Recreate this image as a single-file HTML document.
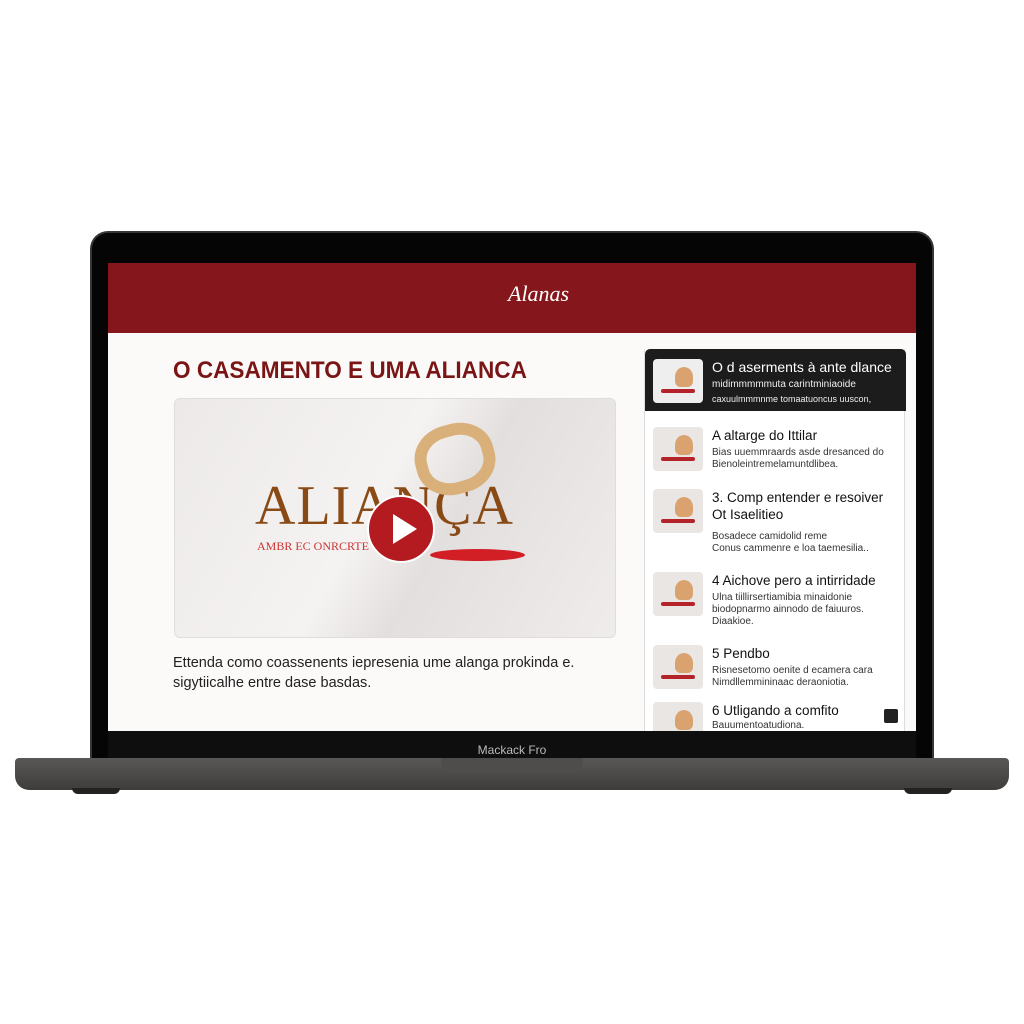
<!DOCTYPE html>
<html><head><meta charset="utf-8"><style>
*{margin:0;padding:0;box-sizing:border-box}
body{width:1024px;height:1024px;background:#fff;position:relative;overflow:hidden;font-family:"Liberation Sans",sans-serif}
.abs{position:absolute}
.bezel{left:90px;top:231px;width:844px;height:532px;background:#050505;border-radius:18px 18px 0 0;border:2px solid #3a3535;border-bottom:none}
.screen{left:108px;top:263px;width:808px;height:468px;background:#fbfaf9;overflow:hidden}
.hdr{left:0;top:0;width:808px;height:70px;background:#85161b}
.base{left:15px;top:758px;width:994px;height:32px;background:linear-gradient(#5a5856,#3e3d3b);border-radius:4px 4px 14px 14px}
.notch{left:441px;top:758px;width:142px;height:14px;background:#4e4d4b;border-radius:0 0 10px 10px}
.foot{top:788px;width:48px;height:6px;background:#222;border-radius:0 0 6px 6px}
.title{left:65px;top:94px;font-size:24px;font-weight:bold;color:#7a1515;transform:scaleX(0.94);transform-origin:left}
.video{left:66px;top:135px;width:442px;height:240px;border-radius:6px;background:linear-gradient(120deg,#ece9e8,#f5f3f2 45%,#e3dfde 60%,#efeceb);border:1px solid #ddd;overflow:hidden}
.para{left:65px;top:390px;font-size:14.5px;line-height:20px;color:#222}
.side{left:536px;top:86px;width:261px;height:400px;border-left:1px solid #ddd;border-right:1px solid #ddd;background:#fff}
.item{position:absolute;left:8px;width:250px}
.th{position:absolute;left:0;top:0;width:50px;height:44px;background:#e9e6e4;border-radius:4px}
.th:after{content:"";position:absolute;left:8px;top:30px;width:34px;height:4px;background:#b5232a;border-radius:2px}
.th:before{content:"";position:absolute;left:22px;top:8px;width:18px;height:20px;background:#d9a26f;border-radius:50% 50% 30% 30%}
.it{position:absolute;left:59px;top:0;font-size:13.5px;color:#111;line-height:17px}
.id{position:absolute;left:59px;font-size:10px;color:#333;line-height:12px}
</style></head><body>
<div class="abs bezel"></div>
<div class="abs screen">
 <div class="abs hdr"><div class="abs" style="left:400px;top:18px;color:#fff;font-family:'Liberation Serif',serif;font-style:italic;font-size:22px">Alanas</div></div>
 <div class="abs title">O CASAMENTO E UMA ALIANCA</div>
 <div class="abs video">
  <div class="abs" style="left:80px;top:75px;font-family:'Liberation Serif',serif;font-size:56px;color:#8a4a16;letter-spacing:1px">ALIANÇA</div>
  <div class="abs" style="left:82px;top:140px;font-family:'Liberation Serif',serif;font-size:12px;color:#c33">AMBR EC ONRCRTE</div>
  <div class="abs" style="left:240px;top:25px;width:80px;height:70px;border:12px solid #d9b07a;border-radius:45%;transform:rotate(-15deg)"></div>
  <div class="abs" style="left:255px;top:150px;width:95px;height:12px;background:#d11f25;border-radius:50%"></div>
  <div class="abs" style="left:192px;top:96px;width:68px;height:68px;border-radius:50%;background:#b31b20;border:2px solid #fff"></div>
  <div class="abs" style="left:218px;top:115px;width:0;height:0;border-left:24px solid #fff;border-top:15px solid transparent;border-bottom:15px solid transparent"></div>
 </div>
 <div class="abs para">Ettenda como coassenents iepresenia ume alanga prokinda e.<br>sigytiicalhe entre dase basdas.</div>
 <div class="abs side">
  <div class="abs" style="left:0;top:0;width:261px;height:62px;background:#1c1c1c;border-radius:5px 5px 0 0"></div>
  <div class="item" style="top:10px"><div class="th" style="background:#eee"></div><div class="it" style="color:#fff;font-size:14px">O d aserments à ante dlance</div><div class="id" style="top:20px;color:#eee">midimmmmmuta carintminiaoide</div><div class="id" style="top:34px;color:#eee;font-size:9px">caxuulmmmnme tomaatuoncus uuscon,</div></div>
  <div class="item" style="top:78px"><div class="th"></div><div class="it">A altarge do Ittilar</div><div class="id" style="top:20px">Bias uuemmraards asde dresanced do</div><div class="id" style="top:32px">Bienoleintremelamuntdlibea.</div></div>
  <div class="item" style="top:140px"><div class="th"></div><div class="it">3. Comp entender e resoiver<br>Ot Isaelitieo</div><div class="id" style="top:42px">Bosadece camidolid reme</div><div class="id" style="top:54px">Conus cammenre e loa  taemesilia..</div></div>
  <div class="item" style="top:223px"><div class="th"></div><div class="it">4 Aichove pero a intirridade</div><div class="id" style="top:20px">Ulna tiillirsertiamibia minaidonie</div><div class="id" style="top:32px">biodopnarmo ainnodo de faiuuros.</div><div class="id" style="top:44px">Diaakioe.</div></div>
  <div class="item" style="top:296px"><div class="th"></div><div class="it">5 Pendbo</div><div class="id" style="top:20px">Risnesetomo oenite d ecamera cara</div><div class="id" style="top:32px">Nimdllemmininaac deraoniotia.</div></div>
  <div class="item" style="top:353px"><div class="th"></div><div class="it">6 Utligando a comfito</div><div class="id" style="top:18px">Bauumentoatudiona.</div></div>
  <div class="abs" style="left:239px;top:360px;width:14px;height:14px;background:#222;border-radius:2px"></div>
 </div>
</div>
<div class="abs" style="left:108px;top:731px;width:808px;height:28px;background:#0e0e0e"></div>
<div class="abs" style="left:0;top:743px;width:1024px;text-align:center;color:#bbb;font-size:12px">Mackack Fro</div>
<div class="abs base"></div>
<div class="abs notch"></div>
<div class="abs foot" style="left:72px"></div>
<div class="abs foot" style="left:904px"></div>
</body></html>
